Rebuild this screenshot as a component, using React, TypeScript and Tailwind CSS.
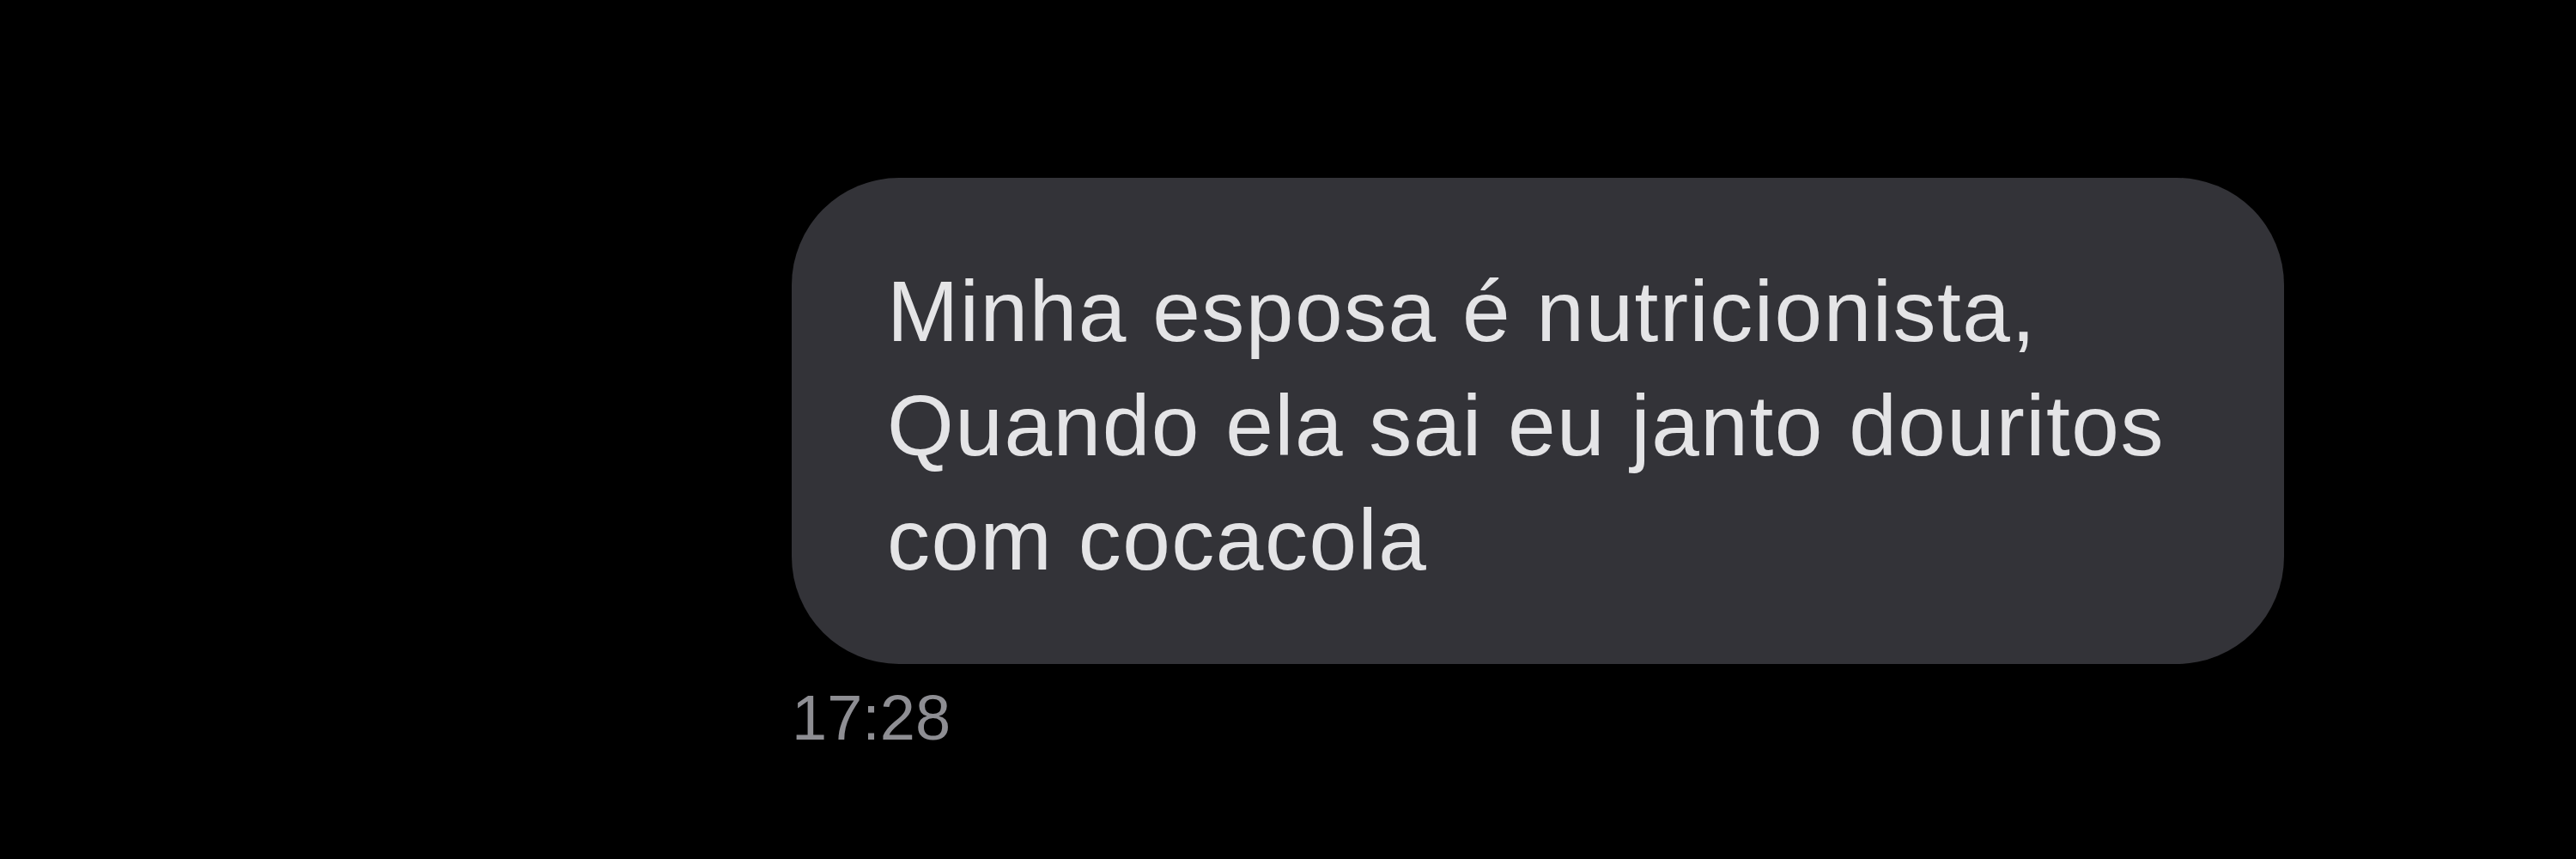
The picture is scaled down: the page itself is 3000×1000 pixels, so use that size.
export default function App() {
  return (
    <div className="w-[3000px] h-[1000px] bg-black overflow-hidden" style={{ fontFamily: '"Liberation Sans", Arial, sans-serif' }}>
      <div className="pl-[922px] pt-[207px] flex flex-col items-start">
        <div className="w-[1738px] h-[566px] bg-[#333338] rounded-[125px] pl-[111px] pt-[89px]">
          <p className="text-[100px] leading-[133px] text-[#e4e4e6] tracking-[1.5px]">
            Minha esposa é nutricionista,<br />
            Quando ela sai eu janto douritos<br />
            com cocacola
          </p>
        </div>
        <div className="mt-[23px] text-[74px] leading-[80px] text-[#8e8e93]">17:28</div>
      </div>
    </div>
  );
}
